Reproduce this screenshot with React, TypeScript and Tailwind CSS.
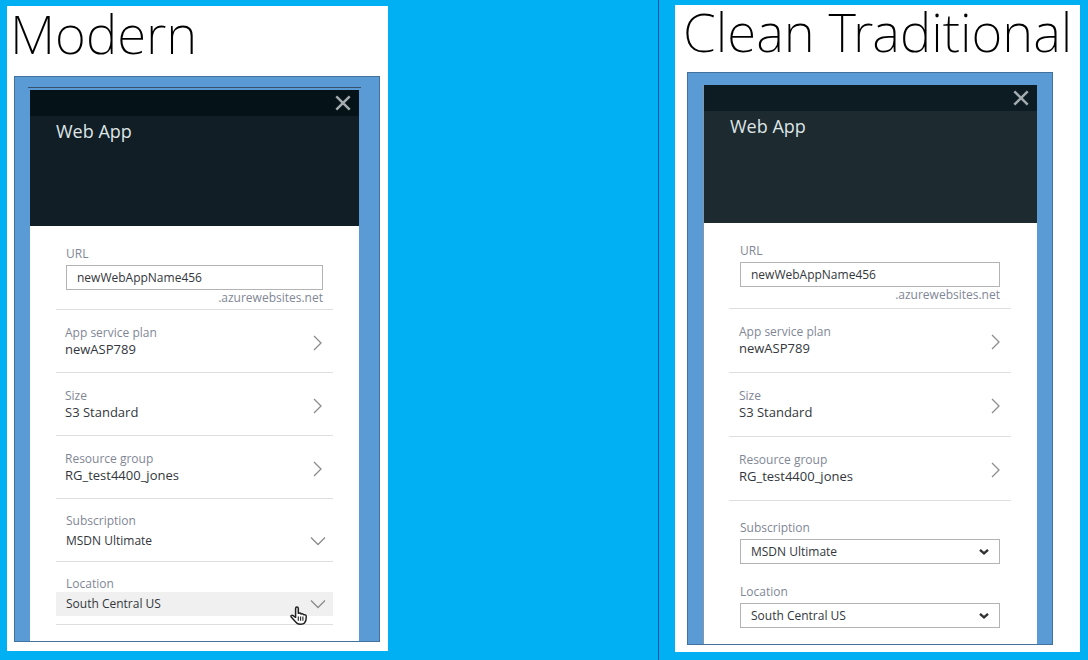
import { ReactNode } from "react";

type RowProps = { label: string; value: string; className: string };

function CloseIcon() {
  return (
    <svg width="16" height="16" viewBox="0 0 16 16" fill="none" stroke="#a3abae" strokeWidth="2.5" aria-hidden="true">
      <path d="M1.3 1.3 14.7 14.7M14.7 1.3 1.3 14.7" />
    </svg>
  );
}

function ChevronRight() {
  return (
    <svg width="10" height="16" viewBox="0 0 10 16" fill="none" stroke="#8c8c8c" strokeWidth="1.3" aria-hidden="true">
      <path d="M1 1 8 8 1 15" />
    </svg>
  );
}

function ThinChevronDown() {
  return (
    <svg width="16" height="10" viewBox="0 0 16 10" fill="none" stroke="#8c8c8c" strokeWidth="1.3" aria-hidden="true">
      <path d="M1 1.5 8 8.5 15 1.5" />
    </svg>
  );
}

function BoldChevronDown() {
  return (
    <svg width="10" height="8" viewBox="0 0 10 8" fill="none" stroke="#333" strokeWidth="2.4" aria-hidden="true">
      <path d="M1 1.8 5 5.4 9 1.8" />
    </svg>
  );
}

function HandPointer() {
  return (
    <svg width="18" height="20" viewBox="0 0 18 20" fill="#fff" stroke="#222" strokeWidth="1.5" strokeLinejoin="round" aria-hidden="true">
      <path d="M5.6 11.3V2.6c0-2 2.7-2 2.7 0v4.6c2-.6 2.6.1 2.8.7 1.6-.4 2.3.1 2.6.9 1.8-.4 2.6.4 2.6 1.9 0 3.3-.3 4.6-1.8 6.2-1.4 1.6-5.9 1.7-7.6.2C5.1 15.7 3.7 13.5 1.4 11.3c-1.2-1.3.4-2.6 1.7-1.7Z" />
      <path d="M8.3 10.5v4.3M10.6 10.5v4.3M12.9 10.5v4.3" strokeWidth="1.1" />
    </svg>
  );
}

function BladeHeader({ bar, fill, height }: { bar: string; fill: string; height: string }) {
  return (
    <header className={`${fill} ${height}`}>
      <div className={`flex h-[26px] items-center justify-end pr-2 ${bar}`}>
        <button type="button" aria-label="Close">
          <CloseIcon />
        </button>
      </div>
      <h2 className="pl-[26px] text-lg leading-[30px] text-[#dfe5e7]">Web App</h2>
    </header>
  );
}

function UrlField({ id, className }: { id: string; className: string }) {
  return (
    <div className={`flex flex-col border-b border-[#dedede] pt-5 ${className}`}>
      <label htmlFor={id} className="leading-4 text-[#7f8796]">
        URL
      </label>
      <input
        id={id}
        type="text"
        defaultValue="newWebAppName456"
        className="mt-[3px] h-[25px] w-full border border-[#b3b3b3] bg-white px-2.5 outline-none"
      />
      <span className="text-right leading-4 text-[#7f8796]">.azurewebsites.net</span>
    </div>
  );
}

function PickerRow({ label, value, className }: RowProps) {
  return (
    <button
      type="button"
      className={`flex w-full items-start justify-between border-b border-[#dedede] pt-3.5 pr-2.5 text-left leading-[17px] ${className}`}
    >
      <span className="flex flex-col">
        <span className="text-[#7f8796]">{label}</span>
        <span className="text-[13px] leading-[17px]">{value}</span>
      </span>
      <span className="pt-[11px]">
        <ChevronRight />
      </span>
    </button>
  );
}

function PickerRows({ className }: { className: string }) {
  return (
    <>
      <PickerRow label="App service plan" value="newASP789" className={className} />
      <PickerRow label="Size" value="S3 Standard" className={className} />
      <PickerRow label="Resource group" value="RG_test4400_jones" className={className} />
    </>
  );
}

function ModernSelect({ id, label, value, fill, children }: { id: string; label: string; value: string; fill: string; children?: ReactNode }) {
  return (
    <div className="flex h-[63px] flex-col border-b border-[#dedede] pt-3.5">
      <label htmlFor={id} className="px-2.5 leading-4 text-[#7f8796]">
        {label}
      </label>
      <div className={`relative flex h-6 items-center ${fill}`}>
        <select id={id} className="h-full w-full appearance-none bg-transparent px-2.5 outline-none">
          <option>{value}</option>
        </select>
        <span className="pointer-events-none absolute right-[7px]">
          <ThinChevronDown />
        </span>
        {children}
      </div>
    </div>
  );
}

function TraditionalSelect({ id, label, value }: { id: string; label: string; value: string }) {
  return (
    <div className="flex flex-col gap-[3px] px-[11px]">
      <label htmlFor={id} className="leading-[17px] text-[#7f8796]">
        {label}
      </label>
      <div className="relative flex h-[25px] items-center">
        <select id={id} className="h-full w-full appearance-none border border-[#b3b3b3] bg-white px-2.5 outline-none">
          <option>{value}</option>
        </select>
        <span className="pointer-events-none absolute right-[11px]">
          <BoldChevronDown />
        </span>
      </div>
    </div>
  );
}

function ModernMockup() {
  return (
    <section className="flex w-full max-w-[381px] flex-col bg-white pr-2 pb-[9px] pl-[7px]">
      <h1 className="-ml-1 h-[70px] font-['Noto_Sans',sans-serif] text-[53px] leading-[56px] font-extralight whitespace-nowrap text-black">
        Modern
      </h1>
      <div className="flex flex-1 flex-col border border-[#41719c] bg-[#5b9bd5] pt-2.5 pr-[18px] pl-[13px]">
        <div className="h-px bg-[#35536f]" />
        <div className="mx-0.5 mt-0.5 flex flex-1 flex-col bg-white">
          <BladeHeader bar="bg-[#051218]" fill="bg-[#111e25]" height="h-[136px]" />
          <div className="mx-[26px] flex flex-col">
            <UrlField id="modern-url" className="h-[84px] px-2.5" />
            <PickerRows className="h-[63px] pl-[9px]" />
            <ModernSelect id="modern-subscription" label="Subscription" value="MSDN Ultimate" fill="bg-white" />
            <ModernSelect id="modern-location" label="Location" value="South Central US" fill="bg-[#f0f0f0]">
              <span className="pointer-events-none absolute top-3.5 right-[25px]">
                <HandPointer />
              </span>
            </ModernSelect>
          </div>
        </div>
      </div>
    </section>
  );
}

function TraditionalMockup() {
  return (
    <section className="flex w-full max-w-[405px] flex-col bg-white pb-[7px] pl-2">
      <h1 className="h-[67px] font-['Noto_Sans',sans-serif] text-[53px] leading-[54px] font-extralight whitespace-nowrap text-black">
        Clean Traditional
      </h1>
      <div className="mr-[27px] ml-1 flex flex-1 flex-col border border-[#41719c] bg-[#5b9bd5] px-[15px] pt-3">
        <div className="flex flex-1 flex-col border-l border-[#8796a5] bg-white">
          <BladeHeader bar="bg-[#0c1c22]" fill="bg-[#1d2a2f]" height="h-[138px]" />
          <div className="mr-[26px] ml-[25px] flex flex-col">
            <UrlField id="traditional-url" className="h-[86px] px-[11px]" />
            <PickerRows className="h-16 pl-2.5" />
            <div className="flex flex-col gap-[19px] pt-[18px]">
              <TraditionalSelect id="traditional-subscription" label="Subscription" value="MSDN Ultimate" />
              <TraditionalSelect id="traditional-location" label="Location" value="South Central US" />
            </div>
          </div>
        </div>
      </div>
    </section>
  );
}

export default function App() {
  return (
    <main className="grid min-h-screen grid-cols-[659fr_429fr] bg-[#00b0f3] font-['Open_Sans','Noto_Sans',sans-serif] text-xs text-[#33373d]">
      <div className="flex border-r border-[#1d4f9c] pt-1.5 pb-[9px] pl-[7px]">
        <ModernMockup />
      </div>
      <div className="flex pt-[5px] pr-2 pb-2 pl-4">
        <TraditionalMockup />
      </div>
    </main>
  );
}
